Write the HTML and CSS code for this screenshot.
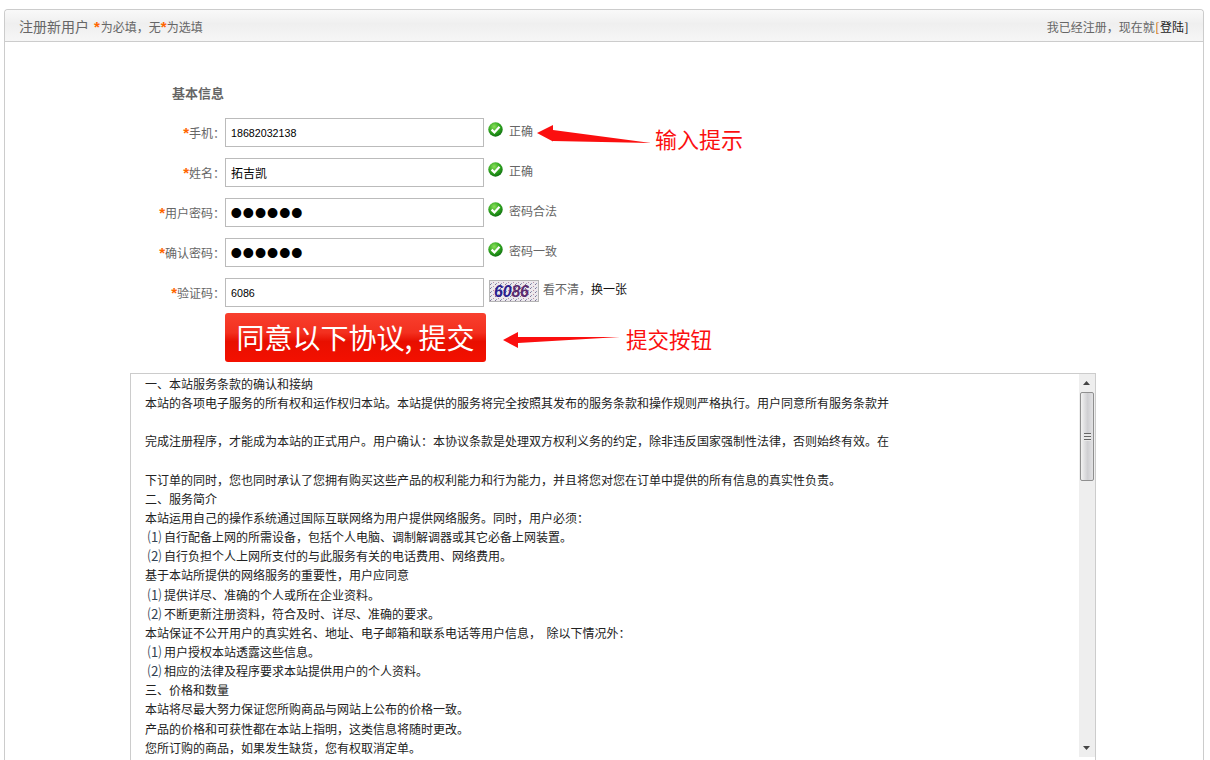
FILE: index.html
```html
<!DOCTYPE html>
<html lang="zh-CN">
<head>
<meta charset="utf-8">
<title>注册新用户</title>
<link rel="stylesheet" href="styles.css">
</head>
<body>
<svg class="defs" width="0" height="0" aria-hidden="true">
  <defs>
    <radialGradient id="okfill" cx="40%" cy="30%" r="75%">
      <stop offset="0" stop-color="#8ae05a"/>
      <stop offset="0.55" stop-color="#2fa51e"/>
      <stop offset="1" stop-color="#0c6a10"/>
    </radialGradient>
    <symbol id="ok" viewBox="0 0 15 15">
      <circle cx="7.5" cy="7.5" r="7.2" fill="url(#okfill)"/>
      <path d="M3.6 7.6 6.4 10.4 11.5 4.8" fill="none" stroke="#fff" stroke-width="2.3"/>
    </symbol>
  </defs>
</svg>
<main class="panel">
  <header class="panel-head">
    <div class="head-left"><span class="head-title">注册新用户</span><span class="star star-first">*</span>为必填，无<span class="star">*</span>为选填</div>
    <div class="head-right">我已经注册，现在就<span class="bracket">[</span><a class="login" href="#">登陆</a><span class="bracket bracket-end">]</span></div>
  </header>

  <form class="form">
    <h2 class="form-title">基本信息</h2>
    <div class="row">
      <label class="label"><span class="star">*</span>手机：</label>
      <input class="field" type="text" value="18682032138">
      <span class="status"><svg class="ok-icon"><use href="#ok"/></svg><span class="status-text">正确</span></span>
    </div>
    <div class="row">
      <label class="label"><span class="star">*</span>姓名：</label>
      <input class="field field-cjk" type="text" value="拓吉凯">
      <span class="status"><svg class="ok-icon"><use href="#ok"/></svg><span class="status-text">正确</span></span>
    </div>
    <div class="row">
      <label class="label"><span class="star">*</span>用户密码：</label>
      <input class="field field-pass" type="password" value="123456">
      <span class="status"><svg class="ok-icon"><use href="#ok"/></svg><span class="status-text">密码合法</span></span>
    </div>
    <div class="row">
      <label class="label"><span class="star">*</span>确认密码：</label>
      <input class="field field-pass" type="password" value="123456">
      <span class="status"><svg class="ok-icon"><use href="#ok"/></svg><span class="status-text">密码一致</span></span>
    </div>
    <div class="row row-captcha">
      <label class="label"><span class="star">*</span>验证码：</label>
      <input class="field" type="text" value="6086">
      <svg class="captcha" viewBox="0 0 50 22">
        <defs>
          <pattern id="noise" width="5" height="4" patternUnits="userSpaceOnUse">
            <rect width="1" height="1" x="1" y="0" fill="#7f7396"/>
            <rect width="1" height="1" x="4" y="2" fill="#b58fa4"/>
            <rect width="1" height="1" x="2" y="3" fill="#8f9cb8"/>
          </pattern>
        </defs>
        <rect width="50" height="22" fill="#ece8ec"/>
        <rect width="50" height="22" fill="url(#noise)"/>
        <rect x="0.5" y="0.5" width="49" height="21" fill="none" stroke="#b5b5b5"/>
        <text class="captcha-text" x="5" y="16.5">60<tspan class="captcha-alt">86</tspan></text>
      </svg>
      <span class="captcha-tip">看不清，<a class="swap" href="#">换一张</a></span>
    </div>
    <div class="submit-row">
      <button class="submit" type="button">同意以下协议, 提交</button>
    </div>
  </form>

  <section class="terms">
    <div class="terms-text">
      <p>一、本站服务条款的确认和接纳</p>
      <p>本站的各项电子服务的所有权和运作权归本站。本站提供的服务将完全按照其发布的服务条款和操作规则严格执行。用户同意所有服务条款并</p>
      <p>&nbsp;</p>
      <p>完成注册程序，才能成为本站的正式用户。用户确认：本协议条款是处理双方权利义务的约定，除非违反国家强制性法律，否则始终有效。在</p>
      <p>&nbsp;</p>
      <p>下订单的同时，您也同时承认了您拥有购买这些产品的权利能力和行为能力，并且将您对您在订单中提供的所有信息的真实性负责。</p>
      <p>二、服务简介</p>
      <p>本站运用自己的操作系统通过国际互联网络为用户提供网络服务。同时，用户必须：</p>
      <p><span class="num">⑴</span>自行配备上网的所需设备，包括个人电脑、调制解调器或其它必备上网装置。</p>
      <p><span class="num">⑵</span>自行负担个人上网所支付的与此服务有关的电话费用、网络费用。</p>
      <p>基于本站所提供的网络服务的重要性，用户应同意</p>
      <p><span class="num">⑴</span>提供详尽、准确的个人或所在企业资料。</p>
      <p><span class="num">⑵</span>不断更新注册资料，符合及时、详尽、准确的要求。</p>
      <p>本站保证不公开用户的真实姓名、地址、电子邮箱和联系电话等用户信息，&nbsp;&nbsp;除以下情况外：</p>
      <p><span class="num">⑴</span>用户授权本站透露这些信息。</p>
      <p><span class="num">⑵</span>相应的法律及程序要求本站提供用户的个人资料。</p>
      <p>三、价格和数量</p>
      <p>本站将尽最大努力保证您所购商品与网站上公布的价格一致。</p>
      <p>产品的价格和可获性都在本站上指明，这类信息将随时更改。</p>
      <p>您所订购的商品，如果发生缺货，您有权取消定单。</p>
    </div>
    <div class="scrollbar">
      <svg class="sb-arrow" viewBox="0 0 16 18"><path d="M4 11h7L7.500 7z" fill="#444"/></svg>
      <div class="sb-thumb"><span class="sb-grip"></span></div>
      <div class="sb-fill"></div>
      <svg class="sb-arrow" viewBox="0 0 16 18"><path d="M4 7h7L7.500 11z" fill="#444"/></svg>
    </div>
  </section>
</main>

<svg class="arrow arrow-hint" viewBox="0 0 116 20"><path d="M1 8 17 0 17 5 115 18 17 16 17 16.500z" fill="#fb0f0f"/></svg>
<span class="note note-hint">输入提示</span>
<svg class="arrow arrow-submit" viewBox="0 0 120 20"><path d="M1 10 16 2 16 7 118 7 16 13 16 18z" fill="#fb0f0f"/></svg>
<span class="note note-submit">提交按钮</span>
</body>
</html>
```
FILE: styles.css
```css
* { box-sizing: border-box; }
html, body { height: 760px; overflow: hidden; }
body {
  margin: 0;
  position: relative;
  background: #fff;
  font: 12px/19.2px "Noto Sans CJK SC", "Liberation Sans", sans-serif;
  color: #666;
}
a { text-decoration: none; }
.defs { position: absolute; }

.panel {
  width: 1200px;
  height: 751px;
  margin: 9px 0 0 4px;
  border: 1px solid #ccc;
  border-bottom: 0;
  border-radius: 4px 4px 0 0;
  background: #fff;
  overflow: hidden;
}
.panel-head {
  display: flex;
  justify-content: space-between;
  align-items: center;
  height: 32px;
  padding: 3px 14px 0 14px;
  border-bottom: 1px solid #ccc;
  background: linear-gradient(#f9f9f9, #efefef 45%, #f6f6f6);
  border-radius: 3px 3px 0 0;
}
.head-title { font-size: 14px; }
.star {
  color: #f60;
  font: 700 15px/1 "Liberation Sans", sans-serif;
}
.star-first { margin: 0 1px 0 5px; }
.bracket { margin: 0 0.5px; color: #c60; }
.bracket-end { color: #222; }
.login { color: #222; }

.form { padding-top: 39px; }
.form-title {
  margin: 0 0 13px 167px;
  font-size: 13px;
  line-height: 24px;
  font-weight: 700;
  color: #666;
}
.row {
  display: flex;
  align-items: flex-start;
  height: 40px;
}
.label {
  width: 220px;
  text-align: right;
  line-height: 29px;
}
.field {
  width: 259px;
  height: 29px;
  padding: 0 5px;
  border: 1px solid #bbb;
  background: #fff;
  color: #000;
  font: 10.7px "Liberation Sans", sans-serif;
  outline: 0;
}
.field-cjk { font: 12px "Noto Sans CJK SC", sans-serif; }
.field-pass {
  padding-left: 4px;
  font: 36px/27px "Liberation Sans", sans-serif;
  letter-spacing: -0.5px;
}
.status {
  display: flex;
  align-items: center;
  height: 15px;
  margin: 4px 0 0 4px;
}
.ok-icon { width: 15px; height: 15px; }
.status-text { margin: 3px 0 0 6px; }

.row-captcha { height: 35px; }
.captcha { width: 50px; height: 22px; margin: 2px 0 0 5px; }
.captcha-text {
  font: italic 700 16px "Liberation Sans", sans-serif;
  fill: #2b1f8f;
  letter-spacing: -0.2px;
}
.captcha-alt { fill: #5a2a6e; }
.captcha-tip { margin: 1px 0 0 4px; }
.swap { color: #111; }

.submit-row { padding-left: 220px; }
.submit {
  display: block;
  width: 261px;
  height: 49px;
  padding: 0;
  border: 0;
  border-radius: 3px;
  background: linear-gradient(#f8402e, #f3301f 40%, #e80f00 58%, #f41000);
  color: #fff;
  font: 28px/49px "Noto Sans CJK SC", sans-serif;
  white-space: nowrap;
}

.terms {
  display: flex;
  width: 966px;
  height: 387px;
  margin: 11px 0 0 125px;
  border: 1px solid #ccc;
  border-bottom: 0;
}
.terms-text {
  flex: 1;
  padding-left: 14px;
  color: #222;
  overflow: hidden;
}
.terms-text p { margin: 0; white-space: nowrap; height: 19.15px; }
.num { display: inline-block; width: 19px; text-align: center; font-size: 13.5px; line-height: 19px; color: #345; }

.scrollbar {
  display: flex;
  flex-direction: column;
  width: 16px;
  height: 383px;
  background: #eee;
}
.sb-arrow { display: block; flex: none; width: 16px; height: 18px; }
.sb-thumb {
  display: flex;
  align-items: center;
  justify-content: center;
  flex: none;
  width: 14px;
  height: 89px;
  margin-left: 1px;
  border: 1px solid #8f8f8f;
  border-radius: 2px;
  background: linear-gradient(90deg, #f2f2f2, #cfcfd2 55%, #e2e2e4);
}
.sb-grip {
  width: 7px;
  height: 8px;
  background: repeating-linear-gradient(#666 0 1px, #e8e8e8 1px 3px);
}
.sb-fill { flex: 1; }

.arrow { position: absolute; }
.arrow-hint { left: 536px; top: 125px; width: 116px; height: 20px; }
.arrow-submit { left: 502px; top: 330px; width: 120px; height: 20px; }
.note {
  position: absolute;
  color: #fb0f0f;
  font: 22px/26px "Noto Sans CJK SC", sans-serif;
  white-space: nowrap;
}
.note-hint { left: 655px; top: 125px; }
.note-submit { left: 626px; top: 326px; font-size: 21.5px; }
```
